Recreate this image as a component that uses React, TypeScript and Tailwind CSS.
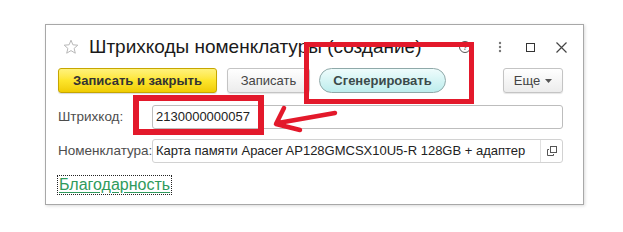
import React from "react";

const font = "font-['Arial','Liberation_Sans',sans-serif]";

function Star() {
  return (
    <svg width="16" height="16" viewBox="0 0 16 16" className="shrink-0">
      <path
        d="M8 1.2l1.9 4.6 4.9.4-3.7 3.2 1.2 4.8L8 11.6l-4.3 2.6 1.2-4.8L1.2 6.2l4.9-.4z"
        fill="none"
        stroke="#b8b8b8"
        strokeWidth="1"
      />
    </svg>
  );
}

function WindowControls() {
  return (
    <div className="flex items-center ml-auto">
      {/* помощь */}
      <div className="w-[12px] h-[12px] rounded-full border border-[#555] text-[9px] leading-[10px] text-center text-[#555] mr-[27px]">?</div>
      {/* меню */}
      <svg width="4" height="12" viewBox="0 0 4 12" className="mr-[24px]">
        <circle cx="2" cy="2" r="1.2" fill="#777" />
        <circle cx="2" cy="6" r="1.2" fill="#777" />
        <circle cx="2" cy="10" r="1.2" fill="#777" />
      </svg>
      {/* развернуть */}
      <div className="w-[9px] h-[9px] border-[1.5px] border-[#333] mr-[21px]"></div>
      {/* закрыть */}
      <svg width="11" height="11" viewBox="0 0 11 11">
        <path d="M0.5 0.5L10.5 10.5M10.5 0.5L0.5 10.5" stroke="#444" strokeWidth="1.2" />
      </svg>
    </div>
  );
}

export default function App() {
  return (
    <div className={`relative w-[623px] h-[232px] bg-white overflow-hidden pt-[24px] pl-[45px] ${font}`}>
      {/* окно формы */}
      <div className="w-[539px] h-[181px] border border-[#a8a8a8] shadow-[1px_1px_3px_rgba(0,0,0,0.15)] bg-white flex flex-col">
        {/* заголовок */}
        <div className="flex items-center h-[40px] pl-[17px] pr-[16px] pt-[4px]">
          <Star />
          <span className="ml-[10px] text-[19px] text-[#1a1a1a] whitespace-nowrap">Штрихкоды номенклатуры (создание)</span>
          <WindowControls />
        </div>

        {/* командная панель */}
        <div className="flex items-center h-[25px] mt-[3px] pl-[12px] pr-[20px]">
          <button className="h-[25px] w-[159px] rounded-[3px] border border-[#c6a600] bg-gradient-to-b from-[#fff27a] via-[#fde52a] to-[#f0cc00] text-[13px] font-bold text-[#333] shadow-[0_1px_1px_rgba(0,0,0,0.15)]">
            Записать и закрыть
          </button>
          <button className="ml-[10px] h-[25px] w-[83px] rounded-[3px] border border-[#c4c4c4] bg-gradient-to-b from-white to-[#ececec] text-[13px] text-[#444] shadow-[0_1px_1px_rgba(0,0,0,0.1)]">
            Записать
          </button>
          <button className="ml-[9px] h-[25px] w-[127px] rounded-full border border-[#8fa9a9] bg-gradient-to-b from-[#eefcfc] to-[#bdeded] text-[13px] font-bold text-[#3a4a4a]">
            Сгенерировать
          </button>
          <button className="ml-auto h-[25px] w-[60px] rounded-[3px] border border-[#c4c4c4] bg-gradient-to-b from-white to-[#ececec] text-[13px] text-[#444] flex items-center justify-center gap-[5px] shadow-[0_1px_1px_rgba(0,0,0,0.1)]">
            Еще
            <svg width="7" height="4" viewBox="0 0 7 4">
              <path d="M0 0h7L3.5 4z" fill="#555" />
            </svg>
          </button>
        </div>

        {/* поля */}
        <div className="flex flex-col gap-[10px] mt-[12px] pl-[12px] pr-[20px]">
          <div className="flex items-center h-[24px]">
            <span className="w-[94px] text-[13.5px] text-[#4d4d4d]">Штрихкод:</span>
            <div className="flex-1 h-[24px] border border-[#bdbdbd] rounded-[3px] px-[3px] flex items-center text-[13px] text-[#222]">
              2130000000057
            </div>
          </div>
          <div className="flex items-center h-[24px]">
            <span className="w-[94px] text-[13.5px] text-[#4d4d4d] whitespace-nowrap">Номенклатура:</span>
            <div className="flex-1 h-[24px] border border-[#d2d2d2] rounded-[3px] flex items-center text-[13px] text-[#222]">
              <span className="flex-1 px-[3px] whitespace-nowrap overflow-hidden">Карта памяти Apacer AP128GMCSX10U5-R 128GB + адаптер</span>
              <div className="w-[22px] h-full border-l border-[#e0e0e0] flex items-center justify-center">
                <svg width="10" height="10" viewBox="0 0 10 10">
                  <rect x="3.5" y="0.5" width="6" height="6" fill="none" stroke="#555" />
                  <path d="M2 3.5H0.5V9.5H6.5V8" fill="none" stroke="#555" />
                </svg>
              </div>
            </div>
          </div>
        </div>

        {/* ссылка */}
        <div className="mt-[10px] pl-[11px]">
          <span className="inline-block border border-dotted border-[#222] px-[1px] text-[16px] leading-[18px] text-[#2f9a5c] underline underline-offset-2">
            Благодарность
          </span>
        </div>
      </div>

      {/* пометки поверх скриншота */}
      <div className="absolute left-[304px] top-[42px] w-[170px] h-[62px] border-[5px] border-[#e3192b]"></div>
      <div className="absolute left-[133px] top-[95px] w-[131px] h-[40px] border-[6px] border-[#e3192b]"></div>
      <svg className="absolute left-0 top-0" width="623" height="232" viewBox="0 0 623 232">
        <path
          d="M335 113 L278 123 M284 108 L276 124 L300 130"
          fill="none"
          stroke="#e3192b"
          strokeWidth="4.5"
          strokeLinecap="round"
          strokeLinejoin="round"
        />
      </svg>
    </div>
  );
}
